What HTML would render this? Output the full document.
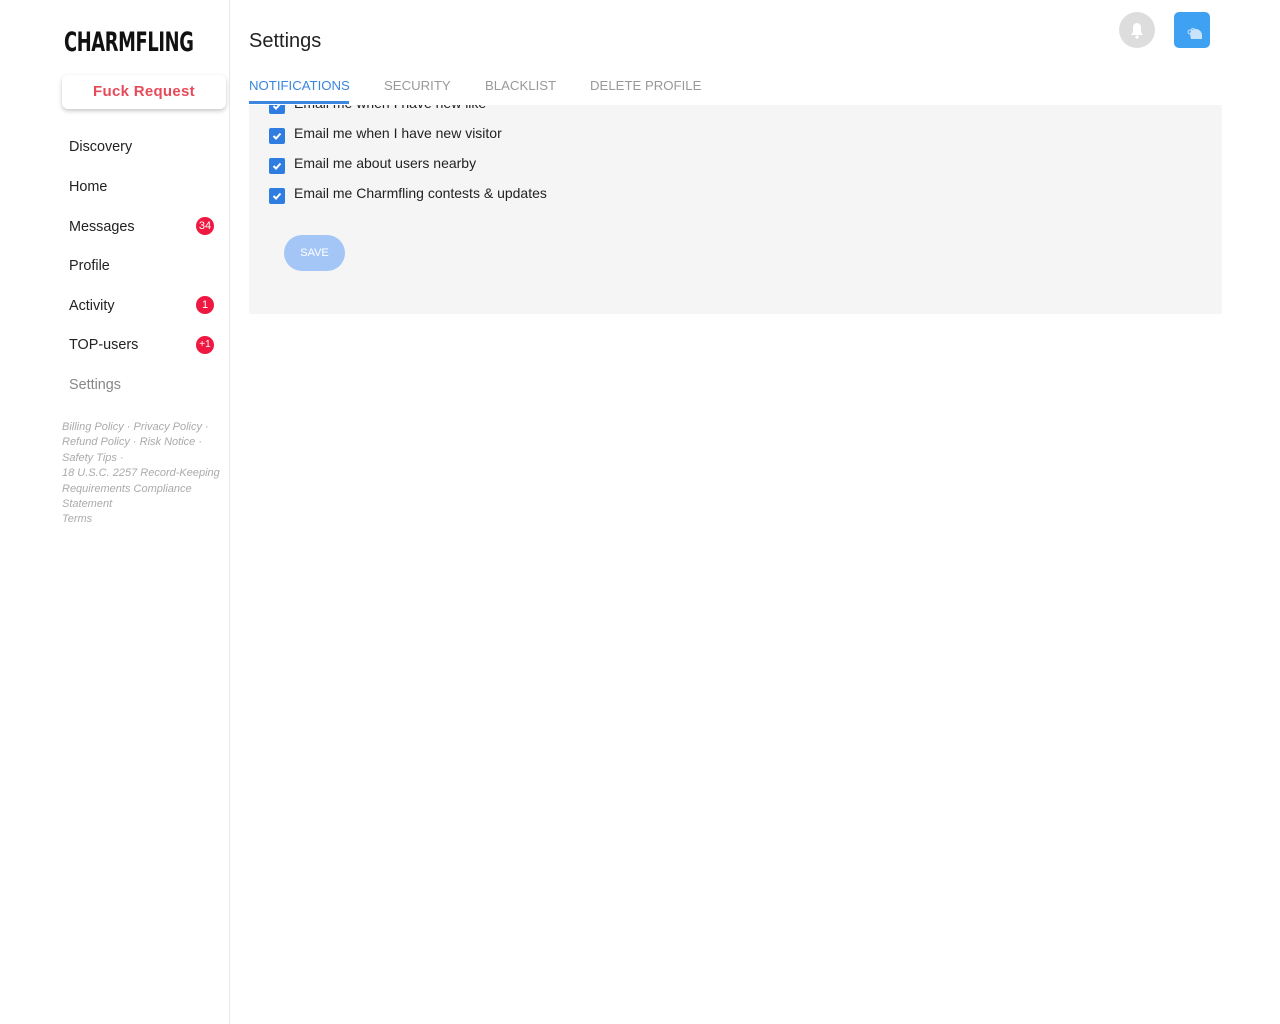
<!DOCTYPE html>
<html><head><meta charset="utf-8"><style>
*{margin:0;padding:0;box-sizing:border-box}
body{width:1280px;height:1024px;background:#fff;font-family:"Liberation Sans",Arial,sans-serif;position:relative;overflow:hidden;color:#222}
.side{position:absolute;left:0;top:0;width:230px;height:1024px;border-right:1px solid #e8e8e8}
.logo{position:absolute;left:64px;top:27px;font-family:"DejaVu Sans Condensed","Liberation Sans Narrow",sans-serif;font-weight:bold;font-size:27px;letter-spacing:-0.5px;transform:scaleX(0.735);transform-origin:left;color:#111}
.btn{position:absolute;left:62px;top:75px;width:164px;height:34px;border-radius:6px;box-shadow:0 2px 4px rgba(0,0,0,.22);color:#e84a5a;font-weight:bold;font-size:15px;text-align:center;line-height:33px;letter-spacing:.3px}
.nav{position:absolute;left:69px;font-size:14.4px;color:#222}
.badge{position:absolute;left:196px;width:18px;height:18px;border-radius:50%;background:#ee1840;color:#fff;font-size:11px;text-align:center;line-height:18px}
.foot{position:absolute;left:62px;top:420px;width:165px;font-size:11px;font-style:italic;color:#aaa;line-height:15.4px}
.title{position:absolute;left:249px;top:30px;font-size:20px;color:#222}
.tab{position:absolute;top:78px;font-size:13.2px;color:#999}
.panel{position:absolute;left:249px;top:105px;width:973px;height:209px;background:#f5f5f5}
.row{position:absolute;left:294px;font-size:14px;color:#222}
.cb{position:absolute;left:269px;width:16px;height:16px;background:#2f7de1;border-radius:2px}
.cb svg{position:absolute;left:2px;top:2px}
.save{position:absolute;left:284px;top:235px;width:61px;height:36px;border-radius:18px;background:#a4c6f7;color:#fff;font-size:11px;text-align:center;line-height:36px}
</style></head><body>
<div class="side">
<div class="logo">CHARMFLING</div>
<div class="btn">Fuck Request</div>
<div class="nav" style="top:139px">Discovery</div>
<div class="nav" style="top:179px">Home</div>
<div class="nav" style="top:219px">Messages</div><div class="badge" style="top:217px">34</div>
<div class="nav" style="top:258px">Profile</div>
<div class="nav" style="top:298px">Activity</div><div class="badge" style="top:296px">1</div>
<div class="nav" style="top:337px">TOP-users</div><div class="badge" style="top:336px;font-size:10px">+1</div>
<div class="nav" style="top:377px;color:#888">Settings</div>
<div class="foot">Billing Policy · Privacy Policy ·<br>Refund Policy · Risk Notice ·<br>Safety Tips ·<br>18 U.S.C. 2257 Record-Keeping<br>Requirements Compliance<br>Statement<br>Terms</div>
</div>
<div class="title">Settings</div>
<div class="tab" style="left:249px;color:#3b86e0">NOTIFICATIONS</div>
<div class="tab" style="left:384px">SECURITY</div>
<div class="tab" style="left:485px">BLACKLIST</div>
<div class="tab" style="left:590px">DELETE PROFILE</div>
<div class="panel"></div>
<div style="position:absolute;left:0;top:105px;width:1280px;height:200px;overflow:hidden">
<div style="position:relative;top:-105px">
<div class="row" style="top:95px">Email me when I have new like</div><div class="cb" style="top:98px"><svg width="12" height="12" viewBox="0 0 12 12"><path d="M2.5 6l2.5 2.5 4.5-5" stroke="#fff" stroke-width="2" fill="none"/></svg></div>
</div></div>
<div style="position:absolute;left:249px;top:101px;width:100px;height:3px;background:#3b86e0"></div>
<div class="row" style="top:125px">Email me when I have new visitor</div><div class="cb" style="top:128px"><svg width="12" height="12" viewBox="0 0 12 12"><path d="M2.5 6l2.5 2.5 4.5-5" stroke="#fff" stroke-width="2" fill="none"/></svg></div>
<div class="row" style="top:155px">Email me about users nearby</div><div class="cb" style="top:158px"><svg width="12" height="12" viewBox="0 0 12 12"><path d="M2.5 6l2.5 2.5 4.5-5" stroke="#fff" stroke-width="2" fill="none"/></svg></div>
<div class="row" style="top:185px">Email me Charmfling contests &amp; updates</div><div class="cb" style="top:188px"><svg width="12" height="12" viewBox="0 0 12 12"><path d="M2.5 6l2.5 2.5 4.5-5" stroke="#fff" stroke-width="2" fill="none"/></svg></div>
<div class="save">SAVE</div>
<div style="position:absolute;left:1119px;top:12px;width:36px;height:36px;border-radius:50%;background:#ddd">
<svg width="36" height="36" viewBox="0 0 36 36"><path d="M12 23h12l-2-3v-5a4 4 0 0 0-8 0v5z" fill="#fff"/><circle cx="18" cy="25" r="1.6" fill="#fff"/></svg></div>
<div style="position:absolute;left:1174px;top:12px;width:36px;height:36px;border-radius:5px;background:#3fa1f2">
<svg width="36" height="36" viewBox="0 0 36 36"><path d="M16 22c0-3 3-5 6-5s6 3 6 6v4H17z" fill="#c9e3fb"/><circle cx="16" cy="20" r="2" fill="none" stroke="#c9e3fb"/><circle cx="19" cy="18" r="1.5" fill="none" stroke="#c9e3fb"/></svg></div>
</body></html>
